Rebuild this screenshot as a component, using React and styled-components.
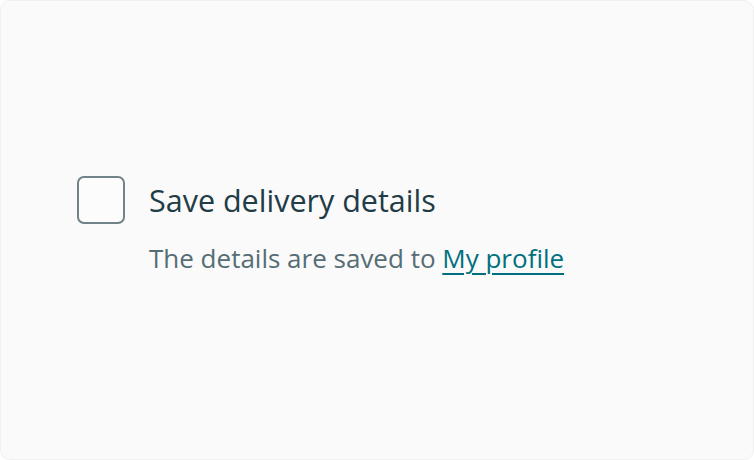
import React from 'react';
import styled, { createGlobalStyle } from 'styled-components';

const GlobalStyle = createGlobalStyle`
  html, body { margin: 0; padding: 0; background: #ffffff; }
  body { font-family: "Open Sans", "Noto Sans", sans-serif; }
`;

const Card = styled.div`
  box-sizing: border-box;
  width: 754px;
  height: 460px;
  background: #fafafa;
  border: 1px solid #f0f0f0;
  border-radius: 10px;
  display: flex;
  flex-direction: column;
  padding: 175px 0 0 76px;
`;

const Row = styled.label`
  display: flex;
  align-items: center;
  gap: 24px;
  cursor: pointer;
`;

const Box = styled.span`
  box-sizing: border-box;
  width: 48px;
  height: 48px;
  border: 2px solid #6f8388;
  border-radius: 7px;
  background: #fcfcfc;
  flex-shrink: 0;
`;

const Label = styled.span`
  font-size: 30.5px;
  line-height: 40px;
  color: #1f3c47;
`;

const Hint = styled.p`
  margin: 16px 0 0 72px;
  font-size: 26px;
  line-height: 36px;
  color: #556d75;
`;

const Link = styled.a`
  color: #00707f;
  text-decoration: underline;
  text-underline-offset: 5px;
  text-decoration-thickness: 1.5px;
`;

export default function App() {
  return (
    <>
      <GlobalStyle />
      <Card>
        <Row>
          <Box />
          <Label>Save delivery details</Label>
        </Row>
        <Hint>
          The details are saved to <Link href="#">My profile</Link>
        </Hint>
      </Card>
    </>
  );
}
